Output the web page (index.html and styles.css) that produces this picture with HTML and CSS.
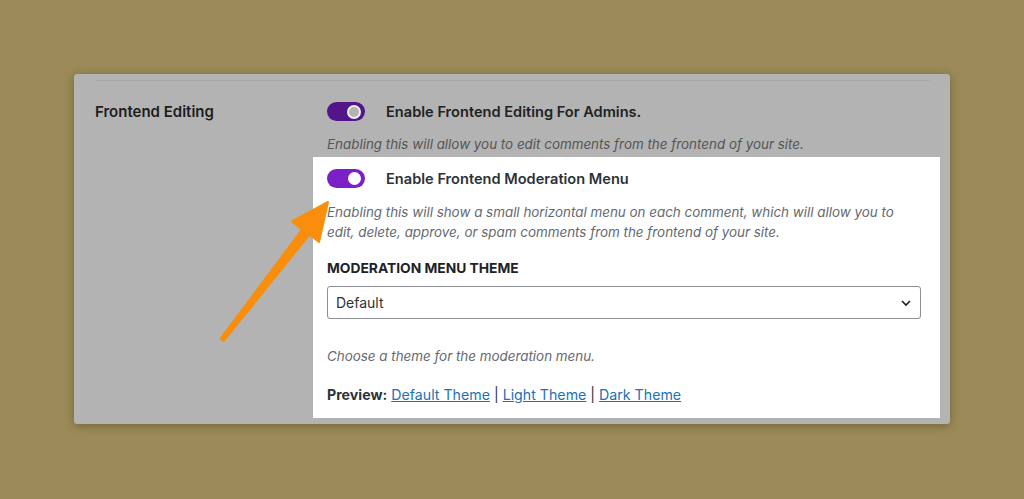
FILE: index.html
```html
<!DOCTYPE html>
<html lang="en">
<head>
    <meta charset="UTF-8">
    <meta name="viewport" content="width=device-width, initial-scale=1.0">
    <title>Frontend Editing</title>
    <link rel="stylesheet" href="styles.css">
</head>
<body>
    <div class="panel">
        <div class="panel-line"></div>
        <div class="setting-row">
            <div class="setting-label">Frontend Editing</div>
            <div class="setting-body">
                <div class="option dimmed">
                    <div class="toggle-row">
                        <span class="toggle"><span class="knob"></span></span>
                        <span class="toggle-text">Enable Frontend Editing For Admins.</span>
                    </div>
                    <p class="desc">Enabling this will allow you to edit comments from the frontend of your site.</p>
                </div>
                <div class="option highlight">
                    <div class="toggle-row">
                        <span class="toggle"><span class="knob"></span></span>
                        <span class="toggle-text">Enable Frontend Moderation Menu</span>
                    </div>
                    <p class="desc">Enabling this will show a small horizontal menu on each comment, which will allow you to edit, delete, approve, or spam comments from the frontend of your site.</p>

                    <h4 class="field-title">MODERATION MENU THEME</h4>
                    <div class="select-box">
                        <span>Default</span>
                        <svg class="chevron" width="12" height="8" viewBox="0 0 12 8"><path d="M2 2 L6 6 L10 2" fill="none" stroke="#1e1e1e" stroke-width="1.6"/></svg>
                    </div>
                    <p class="desc choose">Choose a theme for the moderation menu.</p>
                    <p class="preview"><strong>Preview:</strong> <a href="#">Default Theme</a> | <a href="#">Light Theme</a> | <a href="#">Dark Theme</a></p>
                </div>
            </div>
        </div>
    </div>

    <svg class="arrow" width="1024" height="499" viewBox="0 0 1024 499">
        <polygon points="220.5,338.8 302,229.5 292,221.5 328,202 319,242 309.5,234.5 223.5,341.2" fill="#f98e0c" stroke="#f98e0c" stroke-width="2" stroke-linejoin="round"/>
    </svg>
</body>
</html>
```

FILE: styles.css
```css
body {
    margin: 0;
    background-color: #9c8b58;
    font-family: Inter, "Open Sans", Arial, sans-serif;
    width: 1024px;
    height: 499px;
    overflow: hidden;
    position: relative;
}

.panel {
    margin: 74px 0 0 74px;
    width: 876px;
    height: 350px;
    box-sizing: border-box;
    background-color: #b3b3b3;
    border-radius: 3px;
    box-shadow: 0 2px 10px rgba(40, 30, 0, 0.35);
    padding: 6px 0 0 21px;
}

.panel-line {
    height: 1px;
    margin-right: 20px;
    background-color: #a7a7a7;
}

.setting-row {
    display: flex;
    padding-top: 21px;
}

.setting-label {
    width: 218px;
    font-size: 15px;
    font-weight: 600;
    color: #1d1d1d;
}

.setting-body {
    width: 627px;
}

.option {
    padding-left: 14px;
}

.highlight {
    background-color: #fff;
    padding: 12px 19px 13px 14px;
}

.toggle-row {
    display: flex;
    align-items: center;
    height: 19px;
}

.toggle {
    width: 38px;
    height: 19px;
    border-radius: 10px;
    background-color: #7b20c7;
    position: relative;
    flex-shrink: 0;
}

.knob {
    position: absolute;
    right: 4px;
    top: 3px;
    width: 13px;
    height: 13px;
    border-radius: 50%;
    background-color: #fff;
}

.toggle-text {
    margin-left: 21px;
    font-size: 14.6px;
    font-weight: 600;
    color: #2c3338;
}

.desc {
    margin: 14px 0 0;
    font-size: 13.4px;
    font-style: italic;
    line-height: 20px;
    color: #646970;
}

.dimmed .toggle {
    background-color: #52168a;
}

.dimmed .knob {
    background-color: #b3b3b3;
    border: 2px solid #f0f0f0;
    width: 10px;
    height: 10px;
    top: 2.5px;
}

.dimmed .toggle-text {
    color: #222;
}

.dimmed .desc {
    color: #555;
    margin-top: 13px;
    padding-bottom: 3px;
}

.field-title {
    margin: 18px 0 0;
    font-size: 13.8px;
    font-weight: 700;
    color: #1d2327;
}

.select-box {
    margin-top: 10px;
    height: 33px;
    box-sizing: border-box;
    border: 1px solid #8c8f94;
    border-radius: 3px;
    display: flex;
    align-items: center;
    justify-content: space-between;
    padding: 0 8px;
    font-size: 14px;
    color: #2c3338;
}

.choose {
    margin-top: 27px;
}

.preview {
    margin: 19px 0 0;
    font-size: 14.2px;
    color: #2c3338;
    line-height: 20px;
}

.preview a {
    color: #2271b1;
}

.arrow {
    position: absolute;
    left: 0;
    top: 0;
}
```
